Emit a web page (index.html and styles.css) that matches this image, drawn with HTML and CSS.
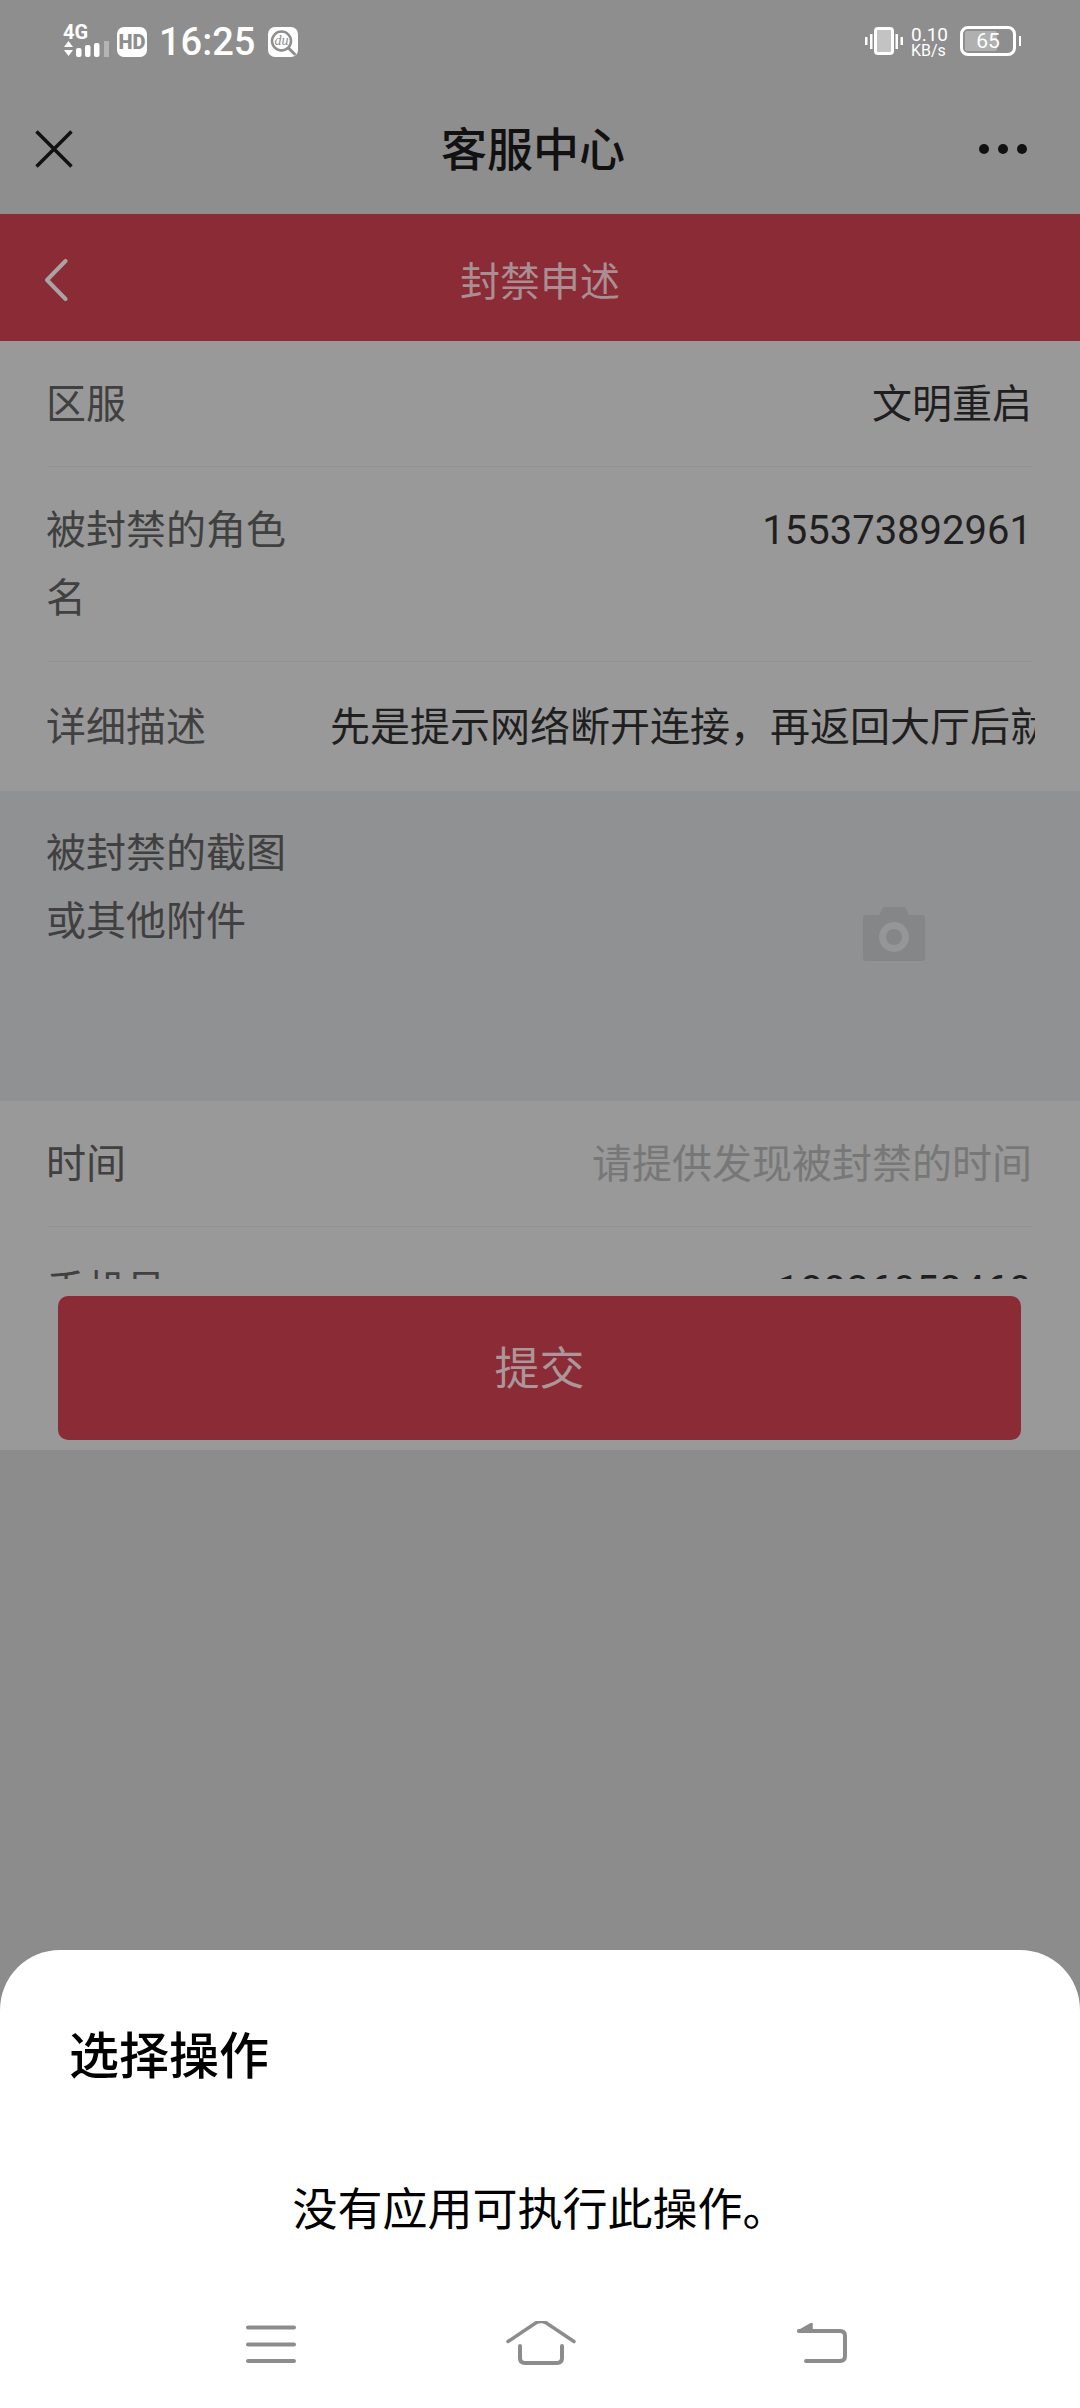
FILE: index.html
```html
<!DOCTYPE html>
<html lang="zh-CN">
<head>
  <meta charset="UTF-8">
  <title>客服中心</title>
  <link rel="stylesheet" href="styles.css">
</head>
<body>
  <div class="top">
    <div class="status">
      <div class="status-left">
        <div class="net">
          <span class="net-label">4G</span>
          <svg width="46" height="18" viewBox="0 0 46 18">
            <path d="M1 6l4.500-6 4.500 6zM1 9h9l-4.500 6z" fill="#fff"/>
            <rect x="13" y="7" width="5.500" height="9" rx="2" fill="#fff"/>
            <rect x="22" y="4" width="5.500" height="12" rx="2" fill="#fff"/>
            <rect x="31" y="2" width="5.500" height="14" rx="2" fill="#fff"/>
            <rect x="41" y="0" width="5" height="16" fill="#b4b4b4"/>
          </svg>
        </div>
        <span class="badge hd">HD</span>
        <span class="clock">16:25</span>
        <span class="badge du">
          <svg width="30" height="30" viewBox="0 0 30 30">
            <circle cx="13.500" cy="14" r="9.500" fill="none" stroke="#8e8e8e" stroke-width="2.500"/>
            <path d="M20.500 21l6 6" stroke="#8e8e8e" stroke-width="3" stroke-linecap="round"/>
            <text x="13.500" y="18" text-anchor="middle" class="du-text">du</text>
          </svg>
        </span>
      </div>
      <div class="status-right">
        <svg width="38" height="28" viewBox="0 0 38 28">
          <rect x="0" y="10" width="2.500" height="8" fill="#fff"/>
          <rect x="5" y="7" width="2.500" height="15" fill="#fff"/>
          <rect x="10.500" y="1.500" width="17" height="25" rx="2.500" fill="#c3c3c3" stroke="#fff" stroke-width="3"/>
          <rect x="30.500" y="7" width="2.500" height="15" fill="#fff"/>
          <rect x="35.500" y="10" width="2.500" height="8" fill="#fff"/>
        </svg>
        <div class="speed"><span>0.10</span><span class="speed-unit">KB/s</span></div>
        <div class="battery">
          <div class="battery-body">
            <div class="battery-fill"></div>
            <span class="battery-num">65</span>
          </div>
          <div class="battery-nub"></div>
        </div>
      </div>
    </div>
    <div class="titlebar">
      <svg width="38" height="38" viewBox="0 0 38 38">
        <path d="M1.500 1.500l35 35M36.500 1.500l-35 35" stroke="#111" stroke-width="3.500" fill="none"/>
      </svg>
      <h1 class="title">客服中心</h1>
      <div class="dots"><i></i><i></i><i></i></div>
    </div>
  </div>

  <div class="header">
    <svg class="back" width="24" height="42" viewBox="0 0 24 42">
      <path d="M21.500 2L3 21l18.500 19" stroke="#a9a3a4" stroke-width="4" fill="none" stroke-linecap="round" stroke-linejoin="round"/>
    </svg>
    <span class="header-title">封禁申述</span>
  </div>

  <div class="form">
    <div class="row">
      <div class="row-inner">
        <span class="label">区服</span>
        <span class="value">文明重启</span>
      </div>
    </div>
    <div class="row">
      <div class="row-inner tall">
        <span class="label">被封禁的角色名</span>
        <span class="value num">155373892961</span>
      </div>
    </div>
    <div class="row">
      <div class="row-inner last">
        <span class="label">详细描述</span>
        <span class="value desc">先是提示网络断开连接，再返回大厅后就无法进入游戏</span>
      </div>
    </div>
    <div class="upload">
      <span class="label">被封禁的截图或其他附件</span>
      <svg class="camera" width="62" height="54" viewBox="0 0 62 54">
        <path d="M3 8h13l4-8h22l4 8h13a3 3 0 0 1 3 3v40a3 3 0 0 1-3 3H3a3 3 0 0 1-3-3V11a3 3 0 0 1 3-3z" fill="#858688"/>
        <circle cx="31" cy="30" r="15" fill="#959698"/>
        <circle cx="31" cy="30" r="8" fill="#858688"/>
      </svg>
    </div>
    <div class="row">
      <div class="row-inner">
        <span class="label">时间</span>
        <span class="value hint">请提供发现被封禁的时间</span>
      </div>
    </div>
    <div class="row">
      <div class="row-inner">
        <span class="label">手机号</span>
        <span class="value num phone">18836052460</span>
      </div>
    </div>
  </div>

  <div class="footer">
    <div class="submit">提交</div>
  </div>

  <div class="filler"></div>

  <div class="sheet">
    <h2 class="sheet-title">选择操作</h2>
    <p class="sheet-msg">没有应用可执行此操作。</p>
    <div class="nav">
      <svg width="50" height="38" viewBox="0 0 50 38">
        <path d="M2 2.500h46M2 19.500h46M2 36h46" stroke="#8c8c8c" stroke-width="4" stroke-linecap="round" fill="none"/>
      </svg>
      <svg width="70" height="44" viewBox="0 0 70 44">
        <path d="M2 20.500L30 1.800q5-2.500 10 0L68 20.500" stroke="#8c8c8c" stroke-width="3.500" stroke-linecap="round" fill="none"/>
        <path d="M14 25v12q0 5 5 5h32q5 0 5-5V25" stroke="#8c8c8c" stroke-width="4" stroke-linecap="round" fill="none"/>
      </svg>
      <svg width="50" height="40" viewBox="0 0 50 40">
        <path d="M0 8.500L15 0v6z" fill="#8c8c8c" stroke="#8c8c8c" stroke-width="1.500" stroke-linejoin="round"/>
        <path d="M2 8h41q5 0 5 5v20q0 5-5 5H9" stroke="#8c8c8c" stroke-width="4" stroke-linecap="round" fill="none"/>
      </svg>
    </div>
  </div>
</body>
</html>
```

FILE: styles.css
```css
* {
  box-sizing: border-box;
}
body {
  margin: 0;
  width: 1080px;
  height: 2408px;
  overflow: hidden;
  display: flex;
  flex-direction: column;
  font-family: "Noto Sans CJK SC", "Noto Sans", sans-serif;
  background: #8c8c8c;
}

/* status + title */
.top {
  background: #8e8e8e;
  height: 214px;
  flex: none;
}
.status {
  height: 84px;
  padding: 26px 59px 0 63px;
  display: flex;
  justify-content: space-between;
  color: #fff;
}
.status-left, .status-right {
  display: flex;
  align-items: flex-start;
}
.net {
  width: 46px;
  display: flex;
  flex-direction: column;
}
.net-label {
  font-family: Roboto, sans-serif;
  font-weight: 700;
  font-size: 20px;
  line-height: 15px;
  height: 15px;
  margin-bottom: 1px;
  margin-top: -1px;
}
.badge {
  width: 30px;
  height: 30px;
  background: #fff;
  border-radius: 7px;
  margin-top: 1px;
  display: flex;
  align-items: center;
  justify-content: center;
}
.hd {
  margin-left: 8px;
  font-family: Roboto, sans-serif;
  font-weight: 900;
  font-size: 20px;
  color: #8e8e8e;
}
.clock {
  font-family: Roboto, sans-serif;
  font-weight: 500;
  font-size: 38px;
  line-height: 30px;
  margin-left: 12px;
  margin-top: 1px;
}
.du {
  margin-left: 13px;
}
.du-text {
  font-family: "Liberation Serif", serif;
  font-style: italic;
  font-size: 14px;
  fill: #8e8e8e;
}
.status-right svg {
  margin-top: 1px;
}
.speed {
  margin-left: 8px;
  width: 41px;
  display: flex;
  flex-direction: column;
  font-family: Roboto, sans-serif;
  font-size: 19px;
  line-height: 17px;
}
.speed-unit {
  font-size: 16px;
  line-height: 15px;
}
.battery {
  margin-left: 8px;
  display: flex;
  align-items: center;
}
.battery-body {
  width: 56px;
  height: 30px;
  border: 3px solid #fff;
  border-radius: 8px;
  padding: 2px;
  display: flex;
  align-items: center;
  justify-content: center;
  position: relative;
}
.battery-fill {
  position: absolute;
  left: 2px;
  top: 2px;
  bottom: 2px;
  width: 32px;
  background: #b0b0b0;
  border-radius: 2px;
}
.battery-num {
  position: relative;
  font-family: Roboto, sans-serif;
  font-size: 21px;
  line-height: 24px;
}
.battery-nub {
  width: 2px;
  height: 10px;
  margin-left: 3px;
  background: #fff;
}
.titlebar {
  height: 130px;
  padding: 0 53px 0 35px;
  display: flex;
  align-items: center;
  justify-content: space-between;
}
.title {
  margin: -6px 0 0;
  font-size: 46px;
  font-weight: 500;
  line-height: 60px;
  color: #111;
  padding-left: 14px;
}
.dots {
  display: flex;
  gap: 9px;
}
.dots i {
  width: 10px;
  height: 10px;
  border-radius: 50%;
  background: #111;
}

/* red header */
.header {
  height: 127px;
  flex: none;
  background: #8a2b36;
  padding-left: 44px;
  display: flex;
  align-items: center;
}
.back {
  margin-top: 4px;
}
.header-title {
  margin-left: 392px;
  margin-top: 2px;
  font-size: 40px;
  color: #a98f93;
}

/* form */
.form {
  height: 938px;
  flex: none;
  overflow: hidden;
  background: #999;
  font-size: 40px;
  line-height: 68px;
}
.row {
  padding: 0 48px 0 47px;
}
.row-inner {
  min-height: 126px;
  padding: 26px 0;
  border-bottom: 1px solid #929292;
  display: flex;
  justify-content: space-between;
}
.row-inner.tall {
  height: 195px;
}
.row-inner.last {
  border-bottom: 0;
  height: 129px;
  padding-top: 28px;
}
.label {
  flex: none;
  width: 240px;
  margin-left: -1px;
  color: #404040;
}
.value {
  color: #1f1f1f;
  text-align: right;
  white-space: nowrap;
}
.num {
  font-family: Roboto, sans-serif;
  padding-top: 4px;
}
.phone {
  letter-spacing: 0.7px;
}
.desc {
  width: 705px;
  text-align: left;
  overflow: hidden;
  margin-right: -3px;
}
.hint {
  color: #777;
}
.upload {
  height: 310px;
  background: #909193;
  padding: 25px 0 0 47px;
  display: flex;
}
.camera {
  margin: 91px 0 0 577px;
}

/* submit button */
.footer {
  height: 171px;
  flex: none;
  background: #999;
  padding: 17px 59px 0 58px;
}
.submit {
  height: 144px;
  padding-bottom: 6px;
  background: #8a2b36;
  border-radius: 10px;
  display: flex;
  align-items: center;
  justify-content: center;
  font-size: 45px;
  color: #ab9699;
}
.filler {
  flex: 1;
}

/* bottom sheet */
.sheet {
  height: 458px;
  flex: none;
  background: #fff;
  border-radius: 60px 60px 0 0;
  padding-top: 67px;
}
.sheet-title {
  margin: 0 0 0 69px;
  font-size: 50px;
  font-weight: 500;
  line-height: 70px;
  color: #000;
}
.sheet-msg {
  margin: 88px 0 0;
  font-size: 45px;
  line-height: 64px;
  text-align: center;
  color: #000;
}
.nav {
  margin-top: 86px;
  padding-left: 246px;
  display: flex;
  align-items: flex-start;
}
.nav svg:nth-child(2) {
  margin: -4px 0 0 210px;
}
.nav svg:nth-child(3) {
  margin: -2px 0 0 221px;
}
```
